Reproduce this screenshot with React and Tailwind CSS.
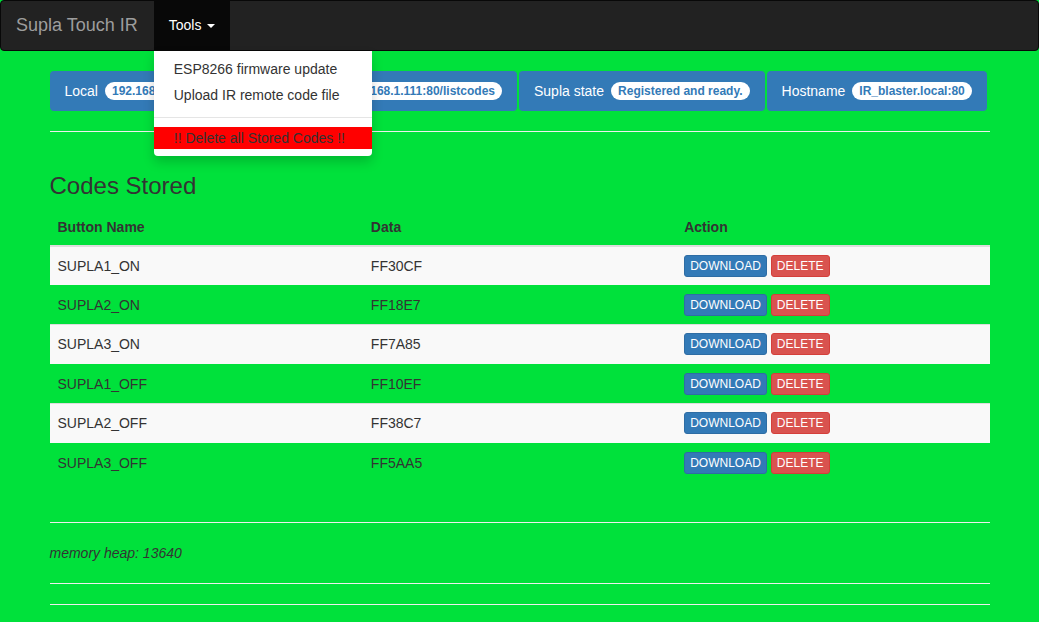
const rows = [
  { name: 'SUPLA1_ON', data: 'FF30CF' },
  { name: 'SUPLA2_ON', data: 'FF18E7' },
  { name: 'SUPLA3_ON', data: 'FF7A85' },
  { name: 'SUPLA1_OFF', data: 'FF10EF' },
  { name: 'SUPLA2_OFF', data: 'FF38C7' },
  { name: 'SUPLA3_OFF', data: 'FF5AA5' },
];

const info = [
  { label: 'Local', value: '192.168.1.111' },
  { label: 'Code listing', value: 'http://192.168.1.111:80/listcodes' },
  { label: 'Supla state', value: 'Registered and ready.' },
  { label: 'Hostname', value: 'IR_blaster.local:80' },
];

function Badge({ children }) {
  return (
    <span className="ml-[7px] inline-flex h-[18px] items-center rounded-full bg-white px-[7px] text-[12px] font-bold text-[#337ab7]">
      {children}
    </span>
  );
}

function Navbar() {
  return (
    <nav className="relative flex h-[51px] items-stretch rounded-[4px] border border-[#080808] bg-[#222]">
      <a className="flex items-center pl-[15px] pr-[16px] text-[18px] text-[#9d9d9d]">Supla Touch IR</a>
      <div className="relative">
        <a className="flex h-full items-center bg-[#080808] px-[15px] text-[14px] text-white">
          Tools
          <span className="ml-[6px] inline-block h-0 w-0 border-x-[4px] border-t-[4px] border-x-transparent border-t-white" />
        </a>
        {/* open dropdown */}
        <ul className="absolute left-0 top-full z-10 mt-[1px] w-[218px] rounded-b-[4px] bg-white pt-[5px] pb-[7px] text-[14px] text-[#333] shadow-[0_6px_12px_rgba(0,0,0,0.18)]">
          <li className="px-[20px] py-[3px] leading-[20px]">ESP8266 firmware update</li>
          <li className="px-[20px] py-[3px] leading-[20px]">Upload IR remote code file</li>
          <li className="my-[9px] h-px bg-[#e5e5e5]" />
          <li className="bg-[#ff0000] px-[20px] py-[1px] leading-[20px] text-[#333]">!! Delete all Stored Codes !!</li>
        </ul>
      </div>
    </nav>
  );
}

export default function App() {
  return (
    <div className="min-h-[622px] bg-[#00e13b] font-['Liberation_Sans',Arial,sans-serif] text-[14px] text-[#333]">
      <Navbar />
      <div className="mx-auto w-[940px]">
        <div className="mt-[20px] flex gap-[2px]">
          {info.map((i) => (
            <div key={i.label} className="flex h-[40px] items-center rounded-[4px] bg-[#337ab7] px-[15px] text-[14px] text-white">
              {i.label}
              <Badge>{i.value}</Badge>
            </div>
          ))}
        </div>
        <hr className="my-[20px] border-t border-[#eee]" />

        <h3 className="mt-[41px] mb-[10px] text-[24px] leading-[26px]">Codes Stored</h3>
        <table className="w-full border-collapse text-left">
          <thead>
            <tr className="border-b-2 border-[#ddd]">
              <th className="w-1/3 p-[8px] leading-[20px] font-bold">Button Name</th>
              <th className="w-1/3 p-[8px] leading-[20px] font-bold">Data</th>
              <th className="w-1/3 p-[8px] leading-[20px] font-bold">Action</th>
            </tr>
          </thead>
          <tbody>
            {rows.map((r, idx) => (
              <tr key={r.name} className={`h-[39.4px] border-t border-[#ddd] ${idx % 2 === 0 ? 'bg-[#f9f9f9]' : 'border-transparent'}`}>
                <td className="px-[8px] leading-[20px]">{r.name}</td>
                <td className="px-[8px] leading-[20px]">{r.data}</td>
                <td className="px-[8px]">
                  <div className="flex gap-[4px]">
                    <button className="h-[22px] rounded-[3px] border border-[#2e6da4] bg-[#337ab7] px-[5px] text-[12px] text-white">DOWNLOAD</button>
                    <button className="h-[22px] rounded-[3px] border border-[#d43f3a] bg-[#d9534f] px-[5px] text-[12px] text-white">DELETE</button>
                  </div>
                </td>
              </tr>
            ))}
          </tbody>
        </table>

        <hr className="mt-[40px] mb-[20px] border-t border-[#eee]" />
        <p className="mb-[10px] leading-[20px] italic">memory heap: 13640</p>
        <hr className="mt-[20px] mb-[20px] border-t border-[#eee]" />
        <hr className="border-t border-[#eee]" />
      </div>
    </div>
  );
}
